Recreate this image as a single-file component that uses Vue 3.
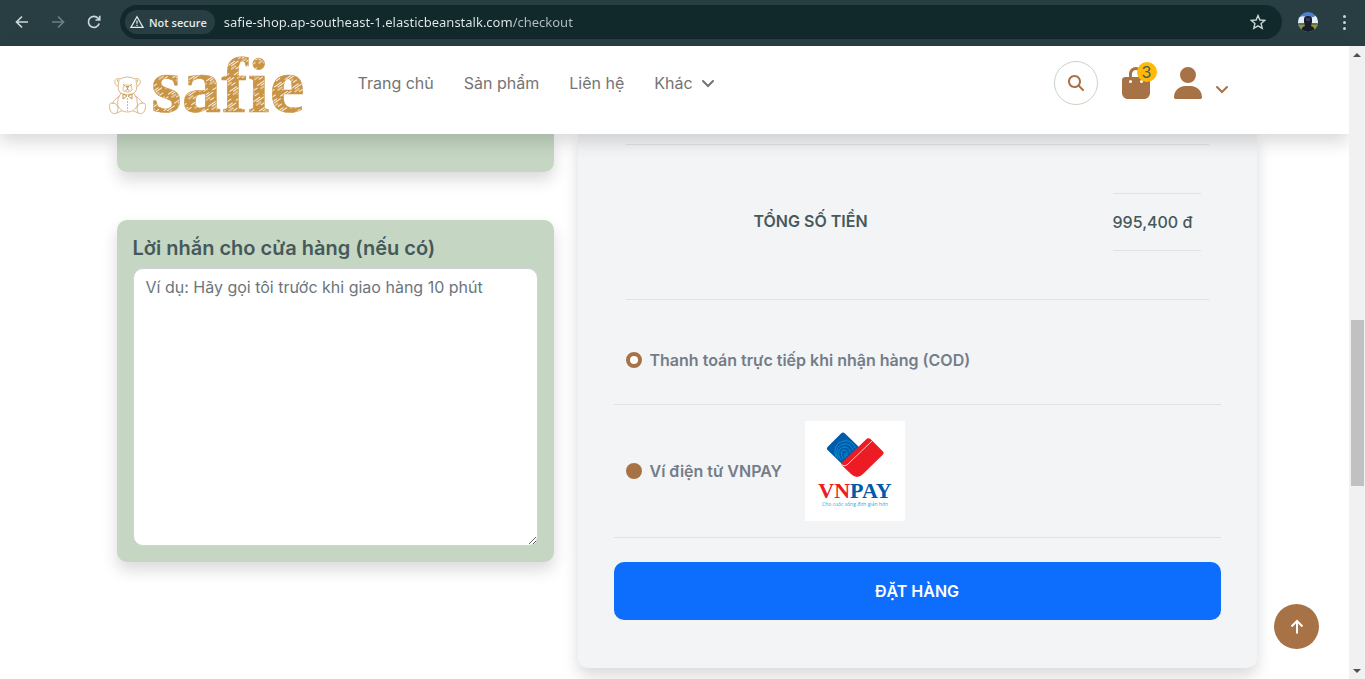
<script setup>
import { ref } from 'vue'

const url = ref('safie-shop.ap-southeast-1.elasticbeanstalk.com/checkout')
const note = ref('')
const payment = ref('cod')
const links = ['Trang chủ', 'Sản phẩm', 'Liên hệ']
</script>

<template>
  <div class="window">
    <div class="toolbar">
      <button class="tool" aria-label="Back">
        <svg width="16" height="16" viewBox="0 0 16 16"><path d="M14 8H3M8 2.5 2.5 8 8 13.5" /></svg>
      </button>
      <button class="tool dim" aria-label="Forward">
        <svg width="16" height="16" viewBox="0 0 16 16"><path d="M2 8h11M8 2.5 13.500 8 8 13.500" /></svg>
      </button>
      <button class="tool" aria-label="Reload">
        <svg width="16" height="16" viewBox="0 0 16 16"><path d="M13.200 9.500A5.500 5.500 0 1 1 12 4.200L13.500 5.700M13.700 1.800V6H9.500" /></svg>
      </button>
      <div class="address">
        <button class="secure">
          <svg width="14" height="14" viewBox="0 0 14 14"><path d="M7 1.800 13 12.300H1ZM7 5.500v3.300M7 9.700v1.300" /></svg>
          Not secure
        </button>
        <input v-model="url" class="url" type="text" aria-label="Address" />
        <button class="tool star" aria-label="Bookmark">
          <svg width="16" height="16" viewBox="0 0 16 16"><path d="M8 1.500 9.900 6l4.800.4-3.600 3.200 1.100 4.700L8 11.800l-4.200 2.500 1.100-4.700L1.300 6.400 6.100 6Z" /></svg>
        </button>
      </div>
      <button class="avatar" aria-label="Profile">
        <svg width="20" height="20" viewBox="0 0 20 20">
          <defs><clipPath id="round"><circle cx="10" cy="10" r="10" /></clipPath></defs>
          <g clip-path="url(#round)">
            <rect width="20" height="20" fill="#4f7fd0" />
            <path d="M0 6q4-3 8-1t12-2v9H0z" fill="#e9eef5" />
            <rect y="11" width="20" height="3" fill="#637347" />
            <rect y="13" width="20" height="7" fill="#8c9a35" />
            <path d="M3 20q0-5 4-6l-1-4V7q0-3 4-3t4 3v3l-1 4q4 1 4 6z" fill="#15202a" />
            <path d="M8 6h4v3H8z" fill="#3b3560" />
          </g>
        </svg>
      </button>
      <button class="menu" aria-label="Menu"><i></i><i></i><i></i></button>
    </div>

    <div class="viewport">
      <div class="page">
        <header class="header">
          <div class="header-inner">
            <a class="logo" href="#" aria-label="safie">
              <svg class="logo-art" width="200" height="94" viewBox="0 -18 200 94">
                <defs>
                  <pattern id="hatch" width="13" height="11" patternUnits="userSpaceOnUse" patternTransform="rotate(-35)">
                    <rect width="13" height="11" fill="#ca9445" />
                    <path d="M0 1.500h9M3 3.500h9M1 6h6M5 8.500h5" stroke="#fff" stroke-width=".9" />
                  </pattern>
                </defs>
                <g fill="none" stroke="#dfb986" stroke-width="1" transform="translate(0 1)">
                  <path d="M10.500 31.500C4 29 7 21.500 12 24q8-4 15 0c5-2.500 8 5 1.500 7.500" />
                  <path d="M9.500 27q-1-3 2-2M29.500 27q1-3-2-2" />
                  <path d="M11 25.500q-3 12 4 13.500 4 1.500 9 0 7-2 4-13.500" />
                  <ellipse cx="19.500" cy="33.500" rx="4.500" ry="3.500" />
                  <path d="M18 31.500h3l-1.500 1.500zM19.500 33v1.500l-2 1M19.500 34.500l2 1M15 29.500l2 1M24 29.500l-2 1" stroke="#c5975b" />
                  <path d="M13 38Q9 43 9.500 50q3 7 10 7t10-7q.5-7-4-12" />
                  <path d="M15 39l4 2-4 3zM24 39l-4 2 4 3z" stroke="#c5975b" />
                  <path d="M19.500 43v13" stroke-dasharray="2 1" />
                  <path d="M11.500 41q-7 5-7 8M27.500 41q7 5 7 8" />
                  <path d="M9 58q-5 2-7-3-2-8 3-7 5 1 5 6zM30 58q5 2 7-3 2-8-3-7-5 1-5 6zM9 58q4-2 5-2M30 58q-4-2-5-2" />
                </g>
                <text x="43" y="58" class="logo-text">safie</text>
              </svg>
            </a>
            <nav class="nav">
              <a v-for="link in links" :key="link" href="#">{{ link }}</a>
              <a href="#">Khác
                <svg class="chevron" width="14" height="16" viewBox="0 0 14 16"><path d="M2 6l5 5 5-5" /></svg>
              </a>
            </nav>
            <button class="search" aria-label="Tìm kiếm">
              <svg width="16" height="16" viewBox="0 0 512 512"><path d="M416 208c0 45.900-14.900 88.300-40 122.700L502.600 457.400c12.500 12.500 12.500 32.800 0 45.300s-32.800 12.500-45.300 0L330.700 376c-34.400 25.200-76.800 40-122.700 40C93.100 416 0 322.900 0 208S93.100 0 208 0S416 93.100 416 208zM208 352a144 144 0 1 0 0-288 144 144 0 1 0 0 288z" /></svg>
            </button>
            <a class="cart" href="#" aria-label="Giỏ hàng">
              <svg width="28" height="32" viewBox="0 0 448 512"><path d="M160 112c0-35.300 28.700-64 64-64s64 28.700 64 64v48H160V112zm-48 48H48c-26.500 0-48 21.500-48 48V416c0 53 43 96 96 96H352c53 0 96-43 96-96V208c0-26.500-21.500-48-48-48H336V112C336 50.100 285.900 0 224 0S112 50.100 112 112v48zm24 48a24 24 0 1 1 0 48 24 24 0 1 1 0-48zm152 24a24 24 0 1 1 48 0 24 24 0 1 1-48 0z" /></svg>
              <span class="badge">3</span>
            </a>
            <button class="user" aria-label="Tài khoản">
              <svg width="28" height="32" viewBox="0 0 448 512"><path d="M224 256A128 128 0 1 0 224 0a128 128 0 1 0 0 256zm-45.700 48C79.800 304 0 383.800 0 482.300C0 498.700 13.300 512 29.700 512H418.300c16.400 0 29.700-13.300 29.700-29.700C448 383.800 368.200 304 269.700 304H178.300z" /></svg>
              <svg class="chevron" width="14" height="16" viewBox="0 0 14 16"><path d="M2 6l5 5 5-5" /></svg>
            </button>
          </div>
        </header>

        <main class="content">
          <div class="left">
            <section class="card upper"></section>
            <section class="card note">
              <label for="note">Lời nhắn cho cửa hàng (nếu có)</label>
              <textarea id="note" v-model="note" rows="11" placeholder="Ví dụ: Hãy gọi tôi trước khi giao hàng 10 phút"></textarea>
            </section>
          </div>

          <section class="order">
            <table class="total">
              <tbody>
                <tr>
                  <td class="blank"></td>
                  <th scope="row">TỔNG SỐ TIỀN</th>
                  <td class="price"><div>995,400 đ</div></td>
                </tr>
              </tbody>
            </table>
            <div class="method cod">
              <input id="cod" v-model="payment" type="radio" name="payment" value="cod" />
              <label for="cod">Thanh toán trực tiếp khi nhận hàng (COD)</label>
            </div>
            <div class="method vnpay">
              <input id="vnpay" v-model="payment" type="radio" name="payment" value="vnpay" />
              <label for="vnpay">Ví điện tử VNPAY</label>
              <svg class="vnpay-logo" width="100" height="100" viewBox="0 0 100 100">
                <rect width="100" height="100" fill="#fff" />
                <path d="M36 12.500q2-2 4 0L55 27 37 43 22.500 29q-1.500-1.500 0-3z" fill="#005baa" />
                <g fill="none" stroke="#0a90d4" stroke-width="1">
                  <path d="M31 36c-3-7 0-15 8-16 6-1 10 3 11 7M33 38c-3-7-1-14 6-15 5-1 8 3 9 6M36 39c-4-6-3-12 3-13 4 0 6 3 6 6M38 38c-2-4-2-9 1-9 3 0 3 3 3 6M40 37v-5" />
                </g>
                <path d="M36 42.500 61 18.500q2.500-2.500 5 0L78 30.500q1.500 1.500 0 3L58 53q-6 6-12 0L36 43.500z" fill="#ed1c24" />
                <path d="M36 43q4 4 8-1l23-22" fill="none" stroke="#fff" stroke-width=".8" />
                <text x="50" y="77" class="brand" text-anchor="middle" fill="#ed1c24">VN<tspan fill="#005baa">PAY</tspan></text>
                <text x="50" y="85" class="slogan" text-anchor="middle">Cho cuộc sống đơn giản hơn</text>
              </svg>
            </div>
            <button class="submit">ĐẶT HÀNG</button>
          </section>
        </main>
        <a class="to-top" href="#" aria-label="Lên đầu trang">
          <svg width="16" height="16" viewBox="0 0 16 16"><path d="M8 14.500V3M2.500 7.500 8 2l5.500 5.500" /></svg>
        </a>
      </div>

      <div class="scrollbar">
        <svg width="16" height="17" viewBox="0 0 16 17"><path d="M8 7l4 4H4z" /></svg>
        <div class="track"><div class="thumb"></div></div>
        <svg width="16" height="17" viewBox="0 0 16 17"><path d="M4 7h8l-4 4z" /></svg>
      </div>
    </div>
  </div>
</template>

<style>
body {
  margin: 0;
  background: #fff;
}
</style>

<style scoped>
* {
  box-sizing: border-box;
}
.window {
  display: flex;
  flex-direction: column;
  height: 100vh;
  overflow: hidden;
  font-family: Inter, "Open Sans", sans-serif;
  font-size: 16px;
  line-height: 24px;
  color: #45595b;
}
button {
  border: 0;
  padding: 0;
  background: none;
  font: inherit;
  color: inherit;
  cursor: pointer;
}
a {
  color: inherit;
  text-decoration: none;
}
svg {
  display: block;
}
.toolbar {
  flex: none;
  display: flex;
  align-items: center;
  height: 46px;
  padding: 0 13px 2px 14px;
  background: #283e42;
}
.tool {
  width: 16px;
  margin-right: 20px;
  color: #c9d7d8;
}
.tool path,
.secure path {
  fill: none;
  stroke: currentColor;
  stroke-width: 1.7;
}
.tool.dim {
  color: #6c8083;
}
.address {
  flex: 1;
  display: flex;
  align-items: center;
  height: 34px;
  margin-left: -2px;
  padding: 0 16px 0 5px;
  border-radius: 17px;
  background: #12292c;
}
.secure {
  display: flex;
  align-items: center;
  gap: 5px;
  height: 24px;
  padding: 0 8px 0 5px;
  border-radius: 12px;
  background: #283e42;
  color: #e2ebeb;
  font: 600 11px "Open Sans", sans-serif;
}
.secure path {
  stroke-width: 1.3;
}
.url {
  flex: 1;
  min-width: 0;
  border: 0;
  outline: 0;
  padding: 0;
  margin-left: 9px;
  font: 13px "Noto Sans", sans-serif;
  color: transparent;
  background: linear-gradient(90deg, #e4ecec 288px, #b4c2c3 288px);
  background-clip: text;
}
.star {
  margin: 0;
}
.star path {
  stroke-width: 1.4;
}
.avatar {
  margin: 0 25px 0 16px;
}
.menu {
  display: grid;
  gap: 3px;
  padding-right: 6px;
}
.menu i {
  width: 3px;
  height: 3px;
  border-radius: 50%;
  background: #c9d7d8;
}
.viewport {
  flex: 1;
  min-height: 0;
  display: flex;
}
.page {
  position: relative;
  flex: 1;
  min-width: 0;
}
.header {
  position: relative;
  z-index: 2;
  background: #fff;
  box-shadow: 0 8px 16px rgba(0, 0, 0, 0.15);
}
.header-inner {
  display: flex;
  align-items: center;
  max-width: 1164px;
  height: 88px;
  margin: 0 auto;
  padding: 0 28px 14px 15px;
}
.logo-art {
  overflow: visible;
}
.logo-text {
  font: bold 79px "Liberation Serif", serif;
  fill: url(#hatch);
  stroke: #ca9445;
  stroke-width: 0.5;
}
.nav {
  display: flex;
  gap: 30px;
  margin-left: 50px;
  margin-right: auto;
  color: #747474;
}
.nav a {
  display: flex;
  align-items: center;
  gap: 8px;
}
.chevron path {
  fill: none;
  stroke: currentColor;
  stroke-width: 2;
  stroke-linecap: round;
}
.search {
  display: grid;
  place-items: center;
  width: 44px;
  height: 44px;
  border: 1px solid #c5d6c3;
  border-radius: 50%;
}
.search,
.cart,
.user {
  color: #a87247;
}
.search path,
.cart path,
.user svg:first-child path {
  fill: currentColor;
}
.cart {
  position: relative;
  margin: 0 24px;
}
.badge {
  position: absolute;
  top: -5px;
  left: 15px;
  width: 20px;
  height: 20px;
  border-radius: 50%;
  background: #ffb908;
  color: #45595b;
  line-height: 20px;
  text-align: center;
}
.user {
  display: flex;
  align-items: center;
  gap: 13px;
}
.user .chevron {
  margin-top: 12px;
}
.content {
  display: grid;
  grid-template-columns: 437fr 679fr;
  align-items: start;
  gap: 24px;
  max-width: 1164px;
  margin: 0 auto;
  padding-left: 24px;
}
.card {
  padding: 16px;
  border-radius: 10px;
  background: #c5d6c3;
  box-shadow: 0 8px 16px rgba(0, 0, 0, 0.15);
}
.upper {
  height: 38px;
  margin-bottom: 48px;
  border-radius: 0 0 10px 10px;
}
.note label {
  display: block;
  margin-bottom: 8px;
  font-size: 20px;
  font-weight: 600;
}
.note textarea {
  display: block;
  width: 100%;
  padding: 6px 12px;
  border: 1px solid #ced4da;
  border-radius: 10px;
  outline: 0;
  background: #fff;
  color: #212529;
  font: inherit;
  resize: vertical;
}
.note textarea::placeholder {
  color: #6c757d;
}
.order {
  padding: 10px 36px 48px;
  border-radius: 0 0 10px 10px;
  background: #f3f4f6;
  box-shadow: 0 8px 16px rgba(0, 0, 0, 0.15);
}
.total {
  width: calc(100% - 24px);
  margin: 0 12px;
  border-collapse: separate;
  border-spacing: 0;
}
.total td,
.total th {
  padding: 48px 8px;
  border-top: 1px solid #dee2e6;
  border-bottom: 1px solid #dee2e6;
  vertical-align: top;
}
.total th {
  padding-top: 64px;
  font-weight: 600;
  text-align: left;
}
.total .blank {
  width: 120px;
}
.total .price {
  width: 104px;
}
.price div {
  padding: 16px 0;
  border-top: 1px solid #dee2e6;
  border-bottom: 1px solid #dee2e6;
  font-weight: 500;
}
.method {
  display: flex;
  align-items: center;
  gap: 8px;
  padding: 16px 12px;
  border-bottom: 1px solid #dee2e6;
  color: #747d88;
  font-weight: 600;
}
.cod {
  padding-top: 48px;
  padding-bottom: 32px;
}
.method input {
  appearance: none;
  width: 16px;
  height: 16px;
  margin: 0;
  border-radius: 50%;
  background: #a87247;
}
.method input:checked {
  background: #fff;
  border: 4px solid #a87247;
}
.vnpay-logo {
  margin-left: 15px;
}
.brand {
  font: bold 22px "Liberation Serif", serif;
}
.slogan {
  font: 5px "Open Sans", sans-serif;
  fill: #2fa9dc;
}
.submit {
  width: 100%;
  height: 58px;
  margin-top: 24px;
  border-radius: 10px;
  background: #0d6efd;
  color: #fff;
  font-weight: 600;
}
.to-top {
  position: absolute;
  right: 30px;
  bottom: 30px;
  display: grid;
  place-items: center;
  width: 45px;
  height: 45px;
  border-radius: 50%;
  background: #a87247;
  color: #fff;
}
.to-top path {
  fill: none;
  stroke: currentColor;
  stroke-width: 2;
}
.scrollbar {
  position: relative;
  z-index: 3;
  flex: none;
  display: flex;
  flex-direction: column;
  width: 16px;
  background: #f1f1f1;
}
.scrollbar path {
  fill: #505050;
}
.track {
  flex: 1;
  display: grid;
  grid-template-rows: 257fr 166fr 176fr;
}
.thumb {
  grid-row: 2;
  margin: 0 1px 0 2px;
  background: #c1c1c1;
}
</style>
